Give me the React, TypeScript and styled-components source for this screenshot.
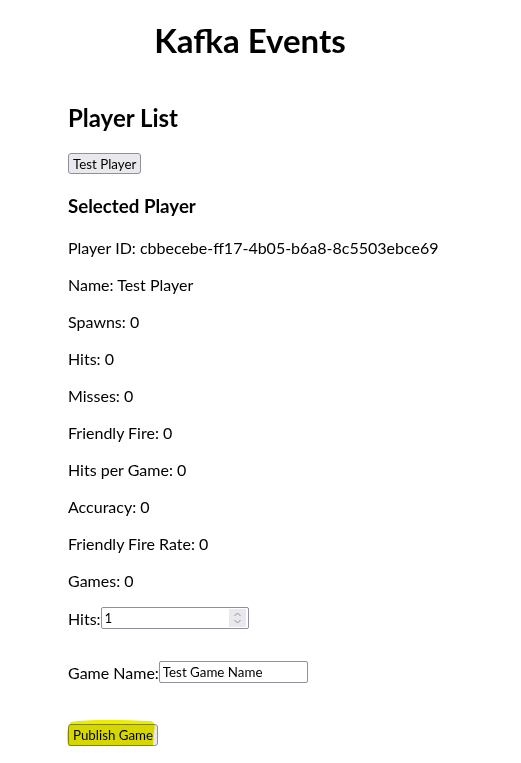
import React from "react";
import styled, { createGlobalStyle } from "styled-components";

const Global = createGlobalStyle`
  body {
    margin: 8px;
    font-family: "Lato", "Open Sans", sans-serif;
    color: #000;
    background: #fff;
  }
`;

const Page = styled.div`
  width: 484px;
`;

const Title = styled.h1`
  font-size: 33px;
  font-weight: 700;
  text-align: center;
  margin: 12px 0 0;
  line-height: 40px;
`;

const Section = styled.div`
  padding-left: 60px;
  display: flex;
  flex-direction: column;
  align-items: flex-start;
`;

const Heading = styled.h2`
  font-size: 24px;
  font-weight: 700;
  margin: 42px 0 19px;
  line-height: 32px;
`;

const SubHeading = styled.h3`
  font-size: 18.72px;
  font-weight: 700;
  margin: 20px 0 0;
  line-height: 25px;
`;

const Line = styled.p<{ $top?: number }>`
  font-size: 16px;
  margin: ${(p) => p.$top ?? 16}px 0 0;
  line-height: 21px;
  display: flex;
  align-items: center;
`;

const Btn = styled.button<{ $h?: number }>`
  font-family: "Lato", sans-serif;
  font-size: 13.33px;
  height: ${(p) => p.$h ?? 21}px;
  padding: 0 4px;
  border: 1px solid #8f8f9d;
  border-radius: 3px;
  background: #e9e9ed;
  color: #000;
`;

const FieldBox = styled.span`
  position: relative;
  display: inline-flex;
`;

const Field = styled.input<{ $w: number }>`
  width: ${(p) => p.$w}px;
  height: 22px;
  box-sizing: border-box;
  border: 1px solid #8f8f9d;
  border-radius: 2px;
  font-family: "Lato", sans-serif;
  font-size: 13.33px;
  padding: 0 3px;
  margin: 0;
  -moz-appearance: textfield;
  &::-webkit-inner-spin-button,
  &::-webkit-outer-spin-button {
    -webkit-appearance: none;
    margin: 0;
  }
`;

const Spinner = styled.svg`
  position: absolute;
  right: 3px;
  top: 2px;
  width: 17px;
  height: 18px;
  background: #e9e9ed;
  pointer-events: none;
`;

const MarkWrap = styled.div`
  position: relative;
  margin-top: 41px;
`;

const Highlight = styled.svg`
  position: absolute;
  left: -3px;
  top: -7px;
  width: 96px;
  height: 40px;
  pointer-events: none;
  mix-blend-mode: multiply;
`;

const stats: [string, string][] = [
  ["Player ID", "cbbecebe-ff17-4b05-b6a8-8c5503ebce69"],
  ["Name", "Test Player"],
  ["Spawns", "0"],
  ["Hits", "0"],
  ["Misses", "0"],
  ["Friendly Fire", "0"],
  ["Hits per Game", "0"],
  ["Accuracy", "0"],
  ["Friendly Fire Rate", "0"],
  ["Games", "0"],
];

export default function App() {
  return (
    <Page>
      <Global />
      <Title>Kafka Events</Title>
      <Section>
        <Heading>Player List</Heading>
        <Btn>Test Player</Btn>
        <SubHeading>Selected Player</SubHeading>
        {stats.map(([k, v], i) => (
          <Line key={k} $top={i === 0 ? 18 : 16}>
            {k}: {v}
          </Line>
        ))}
        <Line>
          Hits:
          <FieldBox>
            <Field $w={148} type="number" defaultValue={1} />
            <Spinner viewBox="0 0 17 18">
              <path
                d="M5.5 7 L8.5 4 L11.5 7 M5.5 11 L8.5 14 L11.5 11"
                fill="none"
                stroke="#8f8f9d"
                strokeWidth="1"
              />
            </Spinner>
          </FieldBox>
        </Line>
        <Line $top={32}>
          Game Name:
          <Field $w={149} type="text" defaultValue="Test Game Name" />
        </Line>
        <MarkWrap>
          <Btn $h={22}>Publish Game</Btn>
          <Highlight viewBox="0 0 96 40">
            <path
              d="M6 5 C22 2 60 3 86 4 C91 6 90 10 89 14 C88 21 89 27 87 31 C72 35 52 40 36 39 C22 38 9 37 4 31 C1 23 1 11 6 5 Z"
              fill="#ecec00"
            />
          </Highlight>
        </MarkWrap>
      </Section>
    </Page>
  );
}
